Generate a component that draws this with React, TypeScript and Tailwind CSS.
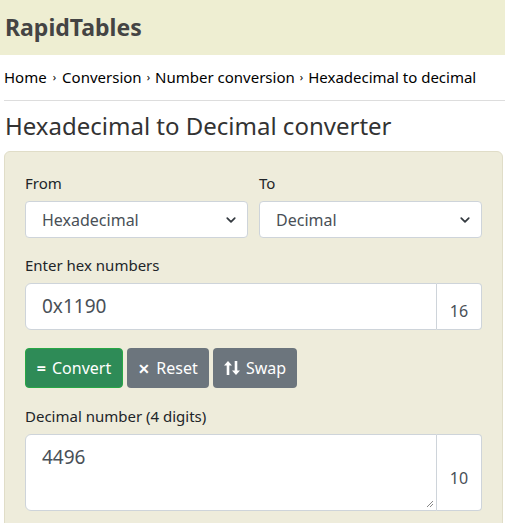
const Chevron = () => (
  <svg width="10" height="10" viewBox="0 0 16 16" className="absolute right-[11px] top-1/2 -translate-y-1/2">
    <path d="M2 5l6 6 6-6" fill="none" stroke="#343a40" strokeWidth="2.8" strokeLinecap="round" strokeLinejoin="round" />
  </svg>
);

const SwapIcon = () => (
  <svg width="16" height="16" viewBox="0 0 16 16" fill="white">
    <path d="M4 1l4 4.5H5.3V15H2.7V5.5H0z" />
    <path d="M12 15l-4-4.5h2.7V1h2.6v9.5H16z" />
  </svg>
);

const Select = ({ value }: { value: string }) => (
  <div className="relative h-[37px] w-full rounded-[4px] border border-[#ced4da] bg-white">
    <span className="absolute left-[16px] top-1/2 -translate-y-1/2 text-[16px] text-[#495057]">{value}</span>
    <Chevron />
  </div>
);

export default function App() {
  return (
    <div className="min-h-[523px] bg-white font-['Noto_Sans',sans-serif] text-[#212529]">
      {/* Header */}
      <div className="flex h-[55px] items-center bg-[#eeeed2] px-[5px]">
        <span className="text-[23px] font-bold text-[#444]">RapidTables</span>
      </div>

      {/* Breadcrumb */}
      <div className="ml-[4px] flex h-[46px] items-center border-b border-[#dddddd] text-[15px] text-black">
        <span>Home</span>
        <span className="mx-[6px] text-[11px]">›</span>
        <span>Conversion</span>
        <span className="mx-[5px] text-[11px]">›</span>
        <span>Number conversion</span>
        <span className="mx-[5px] text-[11px]">›</span>
        <span>Hexadecimal to decimal</span>
      </div>

      <h1 className="mx-[5px] mt-[9px] mb-[9px] text-[24px] leading-[32px] text-[#333]">Hexadecimal to Decimal converter</h1>

      {/* Panel */}
      <div className="ml-[4px] mr-[2px] rounded-t-[6px] border border-[#e0ddc8] bg-[#eeecdb] px-[20px] pt-[20px] pb-[20px]">
        <div className="flex gap-[11px]">
          <div className="flex flex-1 flex-col">
            <label className="mb-[7px] text-[15px] leading-[22px]">From</label>
            <Select value="Hexadecimal" />
          </div>
          <div className="flex flex-1 flex-col">
            <label className="mb-[7px] text-[15px] leading-[22px]">To</label>
            <Select value="Decimal" />
          </div>
        </div>

        <label className="mt-[16px] mb-[7px] block text-[15px] leading-[22px]">Enter hex numbers</label>
        <div className="flex h-[47px]">
          <div className="flex flex-1 items-center rounded-l-[6px] border border-[#ced4da] bg-white pl-[16px] text-[19px] text-[#495057]">
            0x1190
          </div>
          <div className="flex w-[45px] items-end justify-center rounded-r-[4px] border border-l-0 border-[#ced4da] bg-white pb-[6px] text-[16px] text-[#495057]">
            16
          </div>
        </div>

        <div className="mt-[18px] flex gap-[4px]">
          <button className="flex h-[40px] w-[98px] items-center justify-center gap-[6px] rounded-[4px] border border-[#28a745] bg-[#2e8b57] text-[16px] text-white">
            <span className="font-bold">=</span>
            <span>Convert</span>
          </button>
          <button className="flex h-[40px] w-[82px] items-center justify-center gap-[6px] rounded-[4px] bg-[#6c757d] text-[16px] text-white">
            <span className="text-[14px] font-bold">✕</span>
            <span>Reset</span>
          </button>
          <button className="flex h-[40px] w-[84px] items-center justify-center gap-[6px] rounded-[4px] bg-[#6c757d] text-[16px] text-white">
            <SwapIcon />
            <span>Swap</span>
          </button>
        </div>

        <label className="mt-[17px] mb-[7px] block text-[15px] leading-[22px]">Decimal number (4 digits)</label>
        <div className="flex h-[77px]">
          <div className="relative flex-1 rounded-l-[6px] border border-[#ced4da] bg-white pl-[16px] pt-[8px] text-[19px] text-[#495057]">
            4496
            <svg width="8" height="8" viewBox="0 0 8 8" className="absolute right-[2px] bottom-[2px]">
              <path d="M7 1L1 7M7 4L4 7" stroke="#888" strokeWidth="1" />
            </svg>
          </div>
          <div className="flex w-[45px] items-end justify-center rounded-r-[4px] border border-l-0 border-[#ced4da] bg-white pb-[20px] text-[16px] text-[#495057]">
            10
          </div>
        </div>
      </div>
    </div>
  );
}
